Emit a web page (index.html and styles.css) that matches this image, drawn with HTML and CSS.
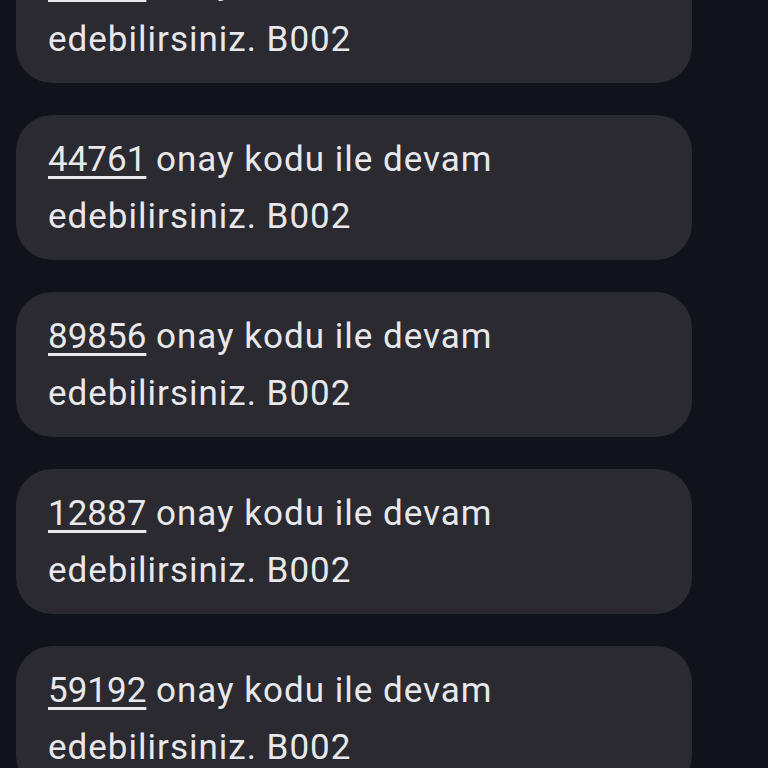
FILE: index.html
```html
<!DOCTYPE html>
<html lang="tr">
<head>
    <meta charset="UTF-8">
    <meta name="viewport" content="width=device-width, initial-scale=1.0">
    <title>Mesajlar</title>
    <link rel="stylesheet" href="styles.css">
</head>
<body>
    <div class="thread">
        <div class="bubble"><span class="code">30518</span> onay kodu ile devam edebilirsiniz. B002</div>
        <div class="bubble"><span class="code">44761</span> onay kodu ile devam edebilirsiniz. B002</div>
        <div class="bubble"><span class="code">89856</span> onay kodu ile devam edebilirsiniz. B002</div>
        <div class="bubble"><span class="code">12887</span> onay kodu ile devam edebilirsiniz. B002</div>
        <div class="bubble"><span class="code">59192</span> onay kodu ile devam edebilirsiniz. B002</div>
    </div>
</body>
</html>
```

FILE: styles.css
```css
body {
    margin: 0;
    background-color: #11131a;
    font-family: Roboto, "Noto Sans", sans-serif;
    overflow: hidden;
}

.thread {
    display: flex;
    flex-direction: column;
    gap: 32px;
    padding: 0 76px 0 16px;
    margin-top: -62px;
}

.bubble {
    background-color: #2a2a30;
    color: #e8e8ec;
    border-radius: 36px;
    height: 145px;
    box-sizing: border-box;
    padding: 16px 120px 0 32px;
    font-size: 35px;
    line-height: 57px;
    letter-spacing: 1px;
}

.code {
    letter-spacing: 0;
    text-decoration: underline;
    text-decoration-thickness: 3px;
    text-underline-offset: 5px;
}
```
